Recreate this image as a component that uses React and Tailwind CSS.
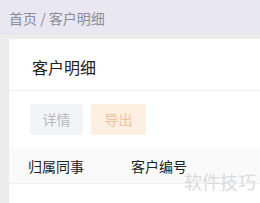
import React from 'react';

const App = () => {
  return (
    <div
      className="w-[260px] h-[203px] overflow-hidden bg-[#e9e7f1] flex flex-col"
      style={{ fontFamily: '"Noto Sans CJK SC", "Noto Sans", sans-serif' }}
    >
      {/* Breadcrumb */}
      <div className="h-[33px] shrink-0 flex items-center pl-[9px] pt-[3px] text-[14px] text-[#8c8c96]">
        首页 / 客户明细
      </div>

      <div className="flex-1 flex flex-col bg-[#ececec] pt-[5px] pl-[9px] border-t border-[#e2e2e2]">
        <div className="flex-1 bg-white flex flex-col relative">
          {/* Title */}
          <div className="h-[52px] shrink-0 flex items-center pl-[23px] pt-[4px] text-[16px] text-[#222] border-b border-[#f2f2f2]">
            客户明细
          </div>

          {/* Buttons */}
          <div className="flex gap-[8px] pl-[21px] pt-[13px] pb-[13px]">
            <div className="w-[53px] h-[31px] flex items-center justify-center bg-[#f3f4f5] text-[14px] text-[#b8b9bd] rounded-[3px]">
              详情
            </div>
            <div className="w-[55px] h-[31px] flex items-center justify-center bg-[#fdefe2] text-[14px] text-[#f2c29c] rounded-[3px]">
              导出
            </div>
          </div>

          {/* Table header */}
          <div className="h-[36px] shrink-0 flex items-center pt-[2px] bg-[#fafafa] border-b border-[#efefef] text-[14px] text-[#222]">
            <div className="w-[122px] pl-[19px]">归属同事</div>
            <div>客户编号</div>
          </div>

          {/* Watermark */}
          <div className="absolute right-[4px] bottom-[8px] text-[18px] text-[#dadada] tracking-[0px]">
            软件技巧
          </div>
        </div>
      </div>
    </div>
  );
};

export default App;
